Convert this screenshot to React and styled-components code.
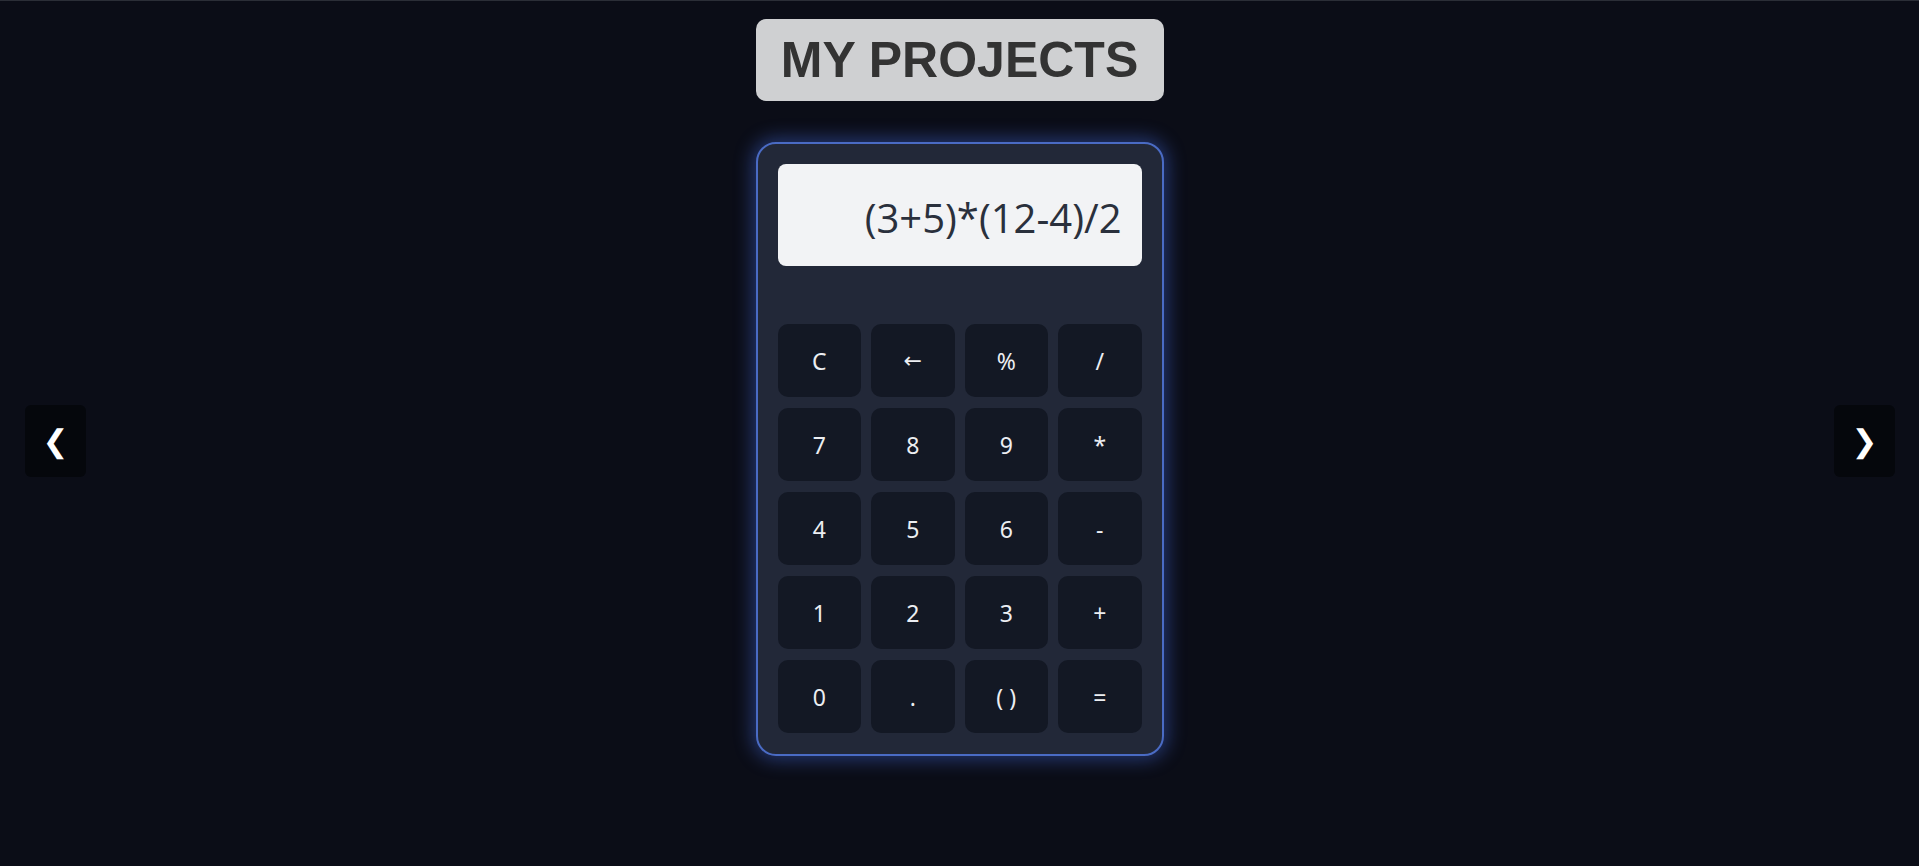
import React from "react";
import styled, { createGlobalStyle } from "styled-components";

const GlobalStyle = createGlobalStyle`
  html, body {
    margin: 0;
    padding: 0;
    background: #0b0d17;
  }
  body {
    font-family: "Noto Sans", "Open Sans", sans-serif;
  }
`;

const Page = styled.div`
  position: relative;
  min-height: 866px;
  box-sizing: border-box;
  border-top: 1px solid #2b2e37;
  background: #0b0d17;
  display: flex;
  flex-direction: column;
  align-items: center;
  padding-top: 18px;
`;

const Title = styled.h1`
  margin: 0;
  width: 408px;
  height: 82px;
  box-sizing: border-box;
  display: flex;
  align-items: center;
  justify-content: center;
  background: #cfd0d2;
  color: #333333;
  border-radius: 10px;
  font-family: "Liberation Sans", Arial, sans-serif;
  font-weight: 700;
  font-size: 50px;
`;

const Calculator = styled.div`
  margin-top: 41px;
  width: 408px;
  box-sizing: border-box;
  padding: 20px 20px 21px;
  background: #222838;
  border: 2px solid #4a6bc4;
  border-radius: 20px;
  box-shadow: 0 0 18px 4px rgba(66, 104, 214, 0.45);
`;

const Display = styled.div`
  height: 102px;
  box-sizing: border-box;
  display: flex;
  align-items: center;
  justify-content: flex-end;
  padding: 4px 20px 0 20px;
  background: #f2f3f5;
  border-radius: 8px;
  color: #2a303c;
  font-family: "Open Sans", "Noto Sans", sans-serif;
  font-size: 40px;
`;

const Keys = styled.div`
  margin-top: 58px;
  display: grid;
  grid-template-columns: repeat(4, 1fr);
  grid-auto-rows: 73px;
  gap: 11px 10px;
`;

const Key = styled.button`
  border: none;
  border-radius: 10px;
  background: #131824;
  color: #eceef2;
  font-family: ${(p) => (p.symbol ? '"DejaVu Sans", sans-serif' : '"Noto Sans", "Open Sans", sans-serif')};
  font-size: ${(p) => (p.symbol ? "22px" : "23px")};
  cursor: pointer;
  padding: 0;
`;

const NavButton = styled.button`
  position: absolute;
  top: 404px;
  ${(p) => (p.side === "left" ? "left: 25px;" : "right: 24px;")}
  width: 61px;
  height: 72px;
  border: none;
  border-radius: 6px;
  background: #05070c;
  color: #ffffff;
  font-family: "DejaVu Sans", sans-serif;
  font-size: 31px;
  font-weight: 700;
  display: flex;
  align-items: center;
  justify-content: center;
  padding: 0;
  cursor: pointer;
`;

const keys = [
  "C", "←", "%", "/",
  "7", "8", "9", "*",
  "4", "5", "6", "-",
  "1", "2", "3", "+",
  "0", ".", "( )", "=",
];

export default function App() {
  return (
    <>
      <GlobalStyle />
      <Page>
        <Title>MY PROJECTS</Title>
        <Calculator>
          <Display>(3+5)*(12-4)/2</Display>
          <Keys>
            {keys.map((k) => (
              <Key key={k} symbol={k === "←" ? 1 : undefined}>
                {k}
              </Key>
            ))}
          </Keys>
        </Calculator>
        <NavButton side="left">❮</NavButton>
        <NavButton side="right">❯</NavButton>
      </Page>
    </>
  );
}
